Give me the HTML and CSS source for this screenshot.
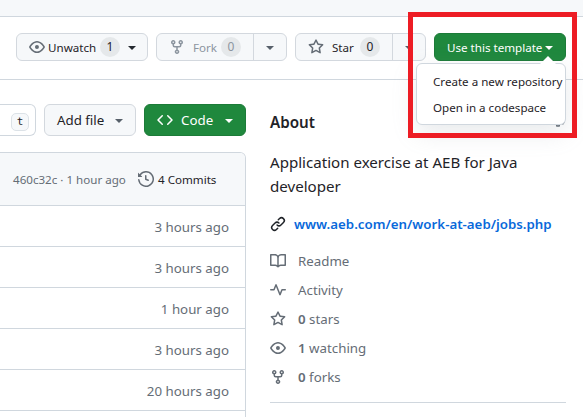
FILE: index.html
```html
<!DOCTYPE html>
<html lang="en">
<head>
<meta charset="utf-8">
<title>Repository</title>
<link rel="stylesheet" href="styles.css">
</head>
<body>
<svg class="sprite" aria-hidden="true">
  <symbol id="eye" viewBox="0 0 16 16"><path d="M8 2c1.981 0 3.671.992 4.933 2.078 1.27 1.091 2.187 2.345 2.637 3.023a1.62 1.62 0 0 1 0 1.798c-.45.678-1.367 1.932-2.637 3.023C11.67 13.008 9.981 14 8 14c-1.981 0-3.671-.992-4.933-2.078C1.797 10.83.88 9.576.43 8.898a1.62 1.62 0 0 1 0-1.798c.45-.677 1.367-1.931 2.637-3.022C4.33 2.992 6.019 2 8 2ZM1.679 7.932a.12.12 0 0 0 0 .136c.411.622 1.241 1.75 2.366 2.717C5.176 11.758 6.527 12.5 8 12.5c1.473 0 2.825-.742 3.955-1.715 1.124-.967 1.954-2.096 2.366-2.717a.12.12 0 0 0 0-.136c-.412-.621-1.242-1.75-2.366-2.717C10.824 4.242 9.473 3.5 8 3.5c-1.473 0-2.825.742-3.955 1.715-1.124.967-1.954 2.096-2.366 2.717ZM8 10a2 2 0 1 1-.001-3.999A2 2 0 0 1 8 10Z"/></symbol>
  <symbol id="fork" viewBox="0 0 16 16"><path d="M5 5.372v.878c0 .414.336.75.75.75h4.5a.75.75 0 0 0 .75-.75v-.878a2.25 2.25 0 1 1 1.5 0v.878a2.25 2.25 0 0 1-2.25 2.25h-1.5v2.128a2.251 2.251 0 1 1-1.5 0V8.5h-1.5A2.25 2.25 0 0 1 3.5 6.25v-.878a2.25 2.25 0 1 1 1.5 0ZM5 3.25a.75.75 0 1 0-1.5 0 .75.75 0 0 0 1.5 0Zm6.75.75a.75.75 0 1 0 0-1.5.75.75 0 0 0 0 1.5Zm-3 8.75a.75.75 0 1 0-1.5 0 .75.75 0 0 0 1.5 0Z"/></symbol>
  <symbol id="star" viewBox="0 0 16 16"><path d="M8 .25a.75.75 0 0 1 .673.418l1.882 3.815 4.21.612a.75.75 0 0 1 .416 1.279l-3.046 2.97.719 4.192a.751.751 0 0 1-1.088.791L8 12.347l-3.766 1.98a.75.75 0 0 1-1.088-.79l.72-4.194L.818 6.374a.75.75 0 0 1 .416-1.28l4.21-.611L7.327.668A.75.75 0 0 1 8 .25Zm0 2.445L6.615 5.5a.75.75 0 0 1-.564.41l-3.097.45 2.24 2.184a.75.75 0 0 1 .216.664l-.528 3.084 2.769-1.456a.75.75 0 0 1 .698 0l2.77 1.456-.53-3.084a.75.75 0 0 1 .216-.664l2.24-2.183-3.096-.45a.75.75 0 0 1-.564-.41L8 2.694Z"/></symbol>
  <symbol id="code" viewBox="0 0 16 16"><path d="m11.28 3.22 4.25 4.25a.75.75 0 0 1 0 1.06l-4.25 4.25a.749.749 0 0 1-1.06-1.06L13.94 8l-3.72-3.72a.749.749 0 0 1 1.06-1.06Zm-6.56 0a.749.749 0 0 1 1.06 1.06L2.06 8l3.72 3.72a.749.749 0 0 1-1.06 1.06L.47 8.53a.75.75 0 0 1 0-1.06Z"/></symbol>
  <symbol id="history" viewBox="0 0 16 16"><path d="m.427 1.927 1.215 1.215a8.002 8.002 0 1 1-1.6 5.685.75.75 0 1 1 1.493-.154 6.5 6.5 0 1 0 1.18-4.458l1.358 1.358A.25.25 0 0 1 3.896 6H.25A.25.25 0 0 1 0 5.75V2.104a.25.25 0 0 1 .427-.177ZM7.75 4a.75.75 0 0 1 .75.75v2.992l2.028.812a.75.75 0 0 1-.557 1.392l-2.5-1A.751.751 0 0 1 7 8.25v-3.5A.75.75 0 0 1 7.75 4Z"/></symbol>
  <symbol id="link" viewBox="0 0 16 16"><path d="m7.775 3.275 1.25-1.25a3.5 3.5 0 1 1 4.95 4.95l-2.5 2.5a3.5 3.5 0 0 1-4.95 0 .751.751 0 0 1 1.06-1.06 1.998 1.998 0 0 0 2.83 0l2.5-2.5a2.002 2.002 0 0 0-2.83-2.83l-1.25 1.25a.751.751 0 0 1-1.06-1.06Zm-4.69 9.64a1.998 1.998 0 0 0 2.83 0l1.25-1.25a.751.751 0 0 1 1.06 1.06l-1.25 1.25a3.5 3.5 0 1 1-4.95-4.95l2.5-2.5a3.5 3.5 0 0 1 4.95 0 .751.751 0 0 1-1.06 1.06 1.998 1.998 0 0 0-2.83 0l-2.5 2.5a1.998 1.998 0 0 0 0 2.83Z"/></symbol>
  <symbol id="book" viewBox="0 0 16 16"><path d="M0 1.75A.75.75 0 0 1 .75 1h4.253c1.227 0 2.317.59 3 1.501A3.743 3.743 0 0 1 11.006 1h4.245a.75.75 0 0 1 .75.75v10.5a.75.75 0 0 1-.75.75h-4.507a2.25 2.25 0 0 0-1.591.659l-.622.621a.75.75 0 0 1-1.06 0l-.622-.621A2.25 2.25 0 0 0 5.258 13H.75a.75.75 0 0 1-.75-.75Zm7.251 10.324.004-5.073-.002-2.253A2.25 2.25 0 0 0 5.003 2.5H1.5v9h3.757a3.75 3.75 0 0 1 1.994.574ZM8.755 4.75l-.004 7.322a3.752 3.752 0 0 1 1.992-.572H14.5v-9h-3.495a2.25 2.25 0 0 0-2.25 2.25Z"/></symbol>
  <symbol id="pulse" viewBox="0 0 16 16"><path d="M6 2c.306 0 .582.187.696.471L10 10.731l1.304-3.26A.751.751 0 0 1 12 7h3.25a.75.75 0 0 1 0 1.5h-2.742l-1.812 4.528a.751.751 0 0 1-1.392 0L6 4.77 4.696 8.03A.75.75 0 0 1 4 8.5H.75a.75.75 0 0 1 0-1.5h2.742l1.812-4.529A.751.751 0 0 1 6 2Z"/></symbol>
  <symbol id="gear" viewBox="0 0 16 16"><g fill="none" stroke="currentColor" stroke-width="1.5" stroke-linejoin="round"><path d="M6.9 1h2.2l.4 1.9 1.5.8 1.9-.6L14 5l-1.4 1.4v3.2L14 11l-1.1 1.9-1.9-.6-1.5.8-.4 1.9H6.900l-.4-1.900-1.500-.800-1.900.6L2 11l1.400-1.400V6.400L2 5l1.100-1.900 1.900.6 1.500-.8Z"/><circle cx="8" cy="8" r="2.3"/></g></symbol>
</svg>

<div class="topbar"></div>
<header class="actions">
  <div class="btn watch">
    <svg class="icon"><use href="#eye"/></svg><span class="label">Unwatch</span><span class="count">1</span><i class="caret"></i>
  </div>
  <div class="btn split disabled">
    <div class="main"><svg class="icon"><use href="#fork"/></svg><span class="label">Fork</span><span class="count">0</span></div>
    <div class="more"><i class="caret"></i></div>
  </div>
  <div class="btn split">
    <div class="main star"><svg class="icon"><use href="#star"/></svg><span class="label">Star</span><span class="count">0</span></div>
    <div class="more"><i class="caret"></i></div>
  </div>
  <div class="btn template">
    <span class="label">Use this template</span><i class="caret"></i>
    <div class="menu"><div class="item first">Create a new repository</div><div class="item second">Open in a codespace</div></div>
  </div>
</header>

<main class="content">
  <section class="files">
    <div class="toolbar">
      <div class="search"><kbd>t</kbd></div>
      <div class="btn add"><span class="label">Add file</span><i class="caret"></i></div>
      <div class="btn code"><svg class="icon"><use href="#code"/></svg><span class="label">Code</span><i class="caret"></i></div>
    </div>
    <div class="table">
      <div class="commit"><span class="hash">460c32c · 1 hour ago</span><svg class="icon"><use href="#history"/></svg><span class="commits">4 Commits</span></div>
      <div class="row">3 hours ago</div>
      <div class="row">3 hours ago</div>
      <div class="row">1 hour ago</div>
      <div class="row">3 hours ago</div>
      <div class="row">20 hours ago</div>
      <div class="row"></div>
    </div>
  </section>
  <aside class="about">
    <div class="heading"><h2>About</h2><svg class="icon"><use href="#gear"/></svg></div>
    <p class="desc">Application exercise at AEB for Java<br>developer</p>
    <div class="site"><svg class="icon"><use href="#link"/></svg><a>www.aeb.com/en/work-at-aeb/jobs.php</a></div>
    <ul class="meta">
      <li><svg class="icon"><use href="#book"/></svg><span class="readme">Readme</span></li>
      <li><svg class="icon"><use href="#pulse"/></svg><span>Activity</span></li>
      <li><svg class="icon"><use href="#star"/></svg><span><b>0</b> stars</span></li>
      <li><svg class="icon"><use href="#eye"/></svg><span><b>1</b> watching</span></li>
      <li><svg class="icon"><use href="#fork"/></svg><span><b>0</b> forks</span></li>
    </ul>
  </aside>
</main>
<div class="highlight"></div>
</body>
</html>
```
FILE: styles.css
```css
* { box-sizing: border-box; }
body {
  margin: 0;
  width: 583px;
  height: 417px;
  overflow: hidden;
  position: relative;
  background: #fff;
  color: #1f2328;
  font-family: "Noto Sans", "Open Sans", sans-serif;
  font-size: 13.3px;
  white-space: nowrap;
}
.sprite { position: absolute; width: 0; height: 0; }
.icon { width: 16px; height: 16px; fill: currentColor; color: #656d76; flex: none; }
.topbar { height: 17px; background: #f6f8fa; border-bottom: 1px solid #d0d7de; }
.actions {
  display: flex;
  gap: 8px;
  height: 63px;
  padding: 16px 0 0 16px;
  border-bottom: 1px solid #d0d7de;
}
.btn {
  display: flex;
  align-items: center;
  flex: none;
  height: 28px;
  border: 1px solid #d3d8de;
  border-radius: 6px;
  background: #f6f8fa;
  font-size: 11.6px;
}
.caret {
  flex: none;
  width: 8px;
  height: 4px;
  margin-top: 2px;
  background: #57606a;
  clip-path: polygon(0 0, 100% 0, 50% 100%);
}
.count {
  flex: none;
  width: 20px;
  height: 20px;
  border-radius: 10px;
  background: #e5e8ea;
  line-height: 20px;
  text-align: center;
  font-size: 12px;
}
.watch { width: 132px; padding-left: 12px; }
.watch .label { width: 52px; padding-left: 3px; }
.watch .count { margin-right: 8px; margin-left: 3px; }
.watch .caret { background: #24292f; }
.split { width: 131px; }
.main { display: flex; align-items: center; height: 26px; width: 97px; padding-left: 12px; border-right: 1px solid #d3d8de; }
.main .label { width: 29px; margin-left: 8px; }
.main .count { margin-left: -1px; }
.main .icon + .label { margin-left: 8px; }
.more { padding-left: 12px; }
.more .caret { display: block; }
.disabled .label, .disabled .count, .disabled .icon { color: #8c959f; }
.template {
  position: relative;
  width: 132px;
  padding-left: 12px;
  background: #1f883d;
  border-color: #1c7b38;
  color: #fff;
}
.template .label { width: 98px; }
.template .caret, .code .caret { background: #fff; }
.menu {
  position: absolute;
  z-index: 2;
  right: -1px;
  top: 29px;
  width: 150px;
  height: 62px;
  padding: 5px 0 0 16px;
  border: 1px solid #d0d7de;
  border-radius: 6px;
  background: #fff;
  color: #1f2328;
  box-shadow: 0 8px 24px rgba(140, 149, 159, .2);
}
.menu::before {
  content: "";
  position: absolute;
  top: -8px;
  right: 9px;
  width: 16px;
  height: 8px;
  background: #fff;
  clip-path: polygon(50% 0, 100% 100%, 0 100%);
}
.item { height: 26px; line-height: 26px; }
.content { display: flex; }
.files { width: 246px; padding-top: 24px; }
.toolbar { display: flex; gap: 8px; }
.search {
  display: flex;
  align-items: center;
  justify-content: flex-end;
  width: 36px;
  height: 32px;
  padding-right: 6px;
  border: 1px solid #d0d7de;
  border-left: 0;
  border-radius: 0 6px 6px 0;
}
kbd {
  width: 18px;
  height: 18px;
  margin-top: 3px;
  border: 1px solid #dce2e7;
  border-radius: 5px;
  background: #f6f8fa;
  font: 11px/15px "DejaVu Sans Mono", monospace;
  text-align: center;
}
.toolbar .btn { height: 32px; font-size: 13.3px; padding-left: 12px; }
.toolbar .add { width: 92px; }
.add .label { width: 58px; }
.toolbar .code { width: 102px; background: #1f883d; border-color: #1c7b38; color: #fff; }
.code .icon { color: #fff; }
.code .label { width: 52px; padding-left: 8px; }
.table {
  margin-top: 16px;
  height: 270px;
  border: 1px solid #d0d7de;
  border-left: 0;
  border-radius: 0 6px 0 0;
  overflow: hidden;
}
.commit { display: flex; align-items: center; height: 52px; padding-left: 13px; background: #f6f8fa; font-size: 11.6px; }
.hash { width: 125px; color: #656d76; }
.commits { margin-left: 4px; }
.row {
  height: 41px;
  padding-right: 16px;
  border-top: 1px solid #d0d7de;
  color: #656d76;
  line-height: 42px;
  text-align: right;
}
.about { width: 296px; margin-left: 24px; padding-top: 30px; }
.heading { display: flex; align-items: center; justify-content: space-between; height: 24px; }
h2 { margin: 0; font-size: 15.2px; font-weight: 600; }
.heading .icon { margin-top: -6px; }
.desc { margin: 16px 0 14px; font-size: 15.1px; line-height: 24px; }
.site { display: flex; align-items: center; height: 24px; margin-bottom: 10px; }
.site .icon { color: #1f2328; }
.site a { margin-left: 8px; color: #0969da; font-weight: 600; }
.meta { margin: 0; padding: 0 0 11px; list-style: none; color: #656d76; border-bottom: 1px solid #d0d7de; }
.meta li { display: flex; align-items: center; gap: 12px; height: 29px; }
.meta b { font-weight: 600; }
.highlight {
  position: absolute;
  z-index: 5;
  left: 408px;
  top: 12px;
  width: 169px;
  height: 126px;
  border: 5px solid #ed1c24;
}
```
